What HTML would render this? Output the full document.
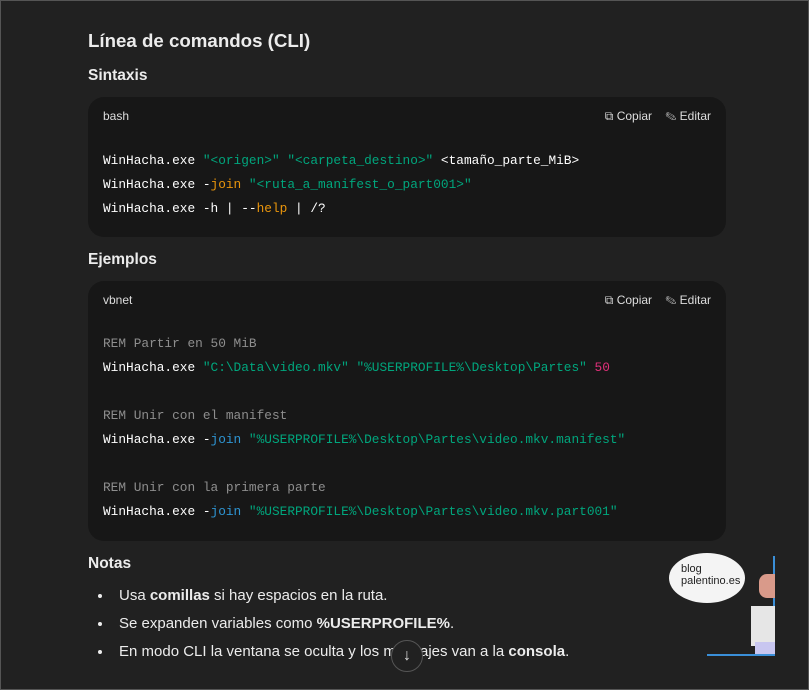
<!DOCTYPE html>
<html><head><meta charset="utf-8"><style>
*{margin:0;padding:0;box-sizing:border-box}
body{width:809px;height:690px;background:#212121;color:#ececec;font-family:"Liberation Sans",sans-serif;overflow:hidden;position:relative;border:1px solid #555}
.h1{position:absolute;left:87px;top:29px;font-size:18.7px;font-weight:bold}
.h3{position:absolute;left:87px;font-size:15.5px;font-weight:bold}
.code{position:absolute;left:87px;width:638px;background:#171717;border-radius:16px}
.hd{position:absolute;top:12px;left:15px;font-size:12px;color:#ddd}
.act{position:absolute;top:12px;right:15px;font-size:12px;color:#ddd}
pre{position:absolute;left:15px;font-family:"Liberation Mono",monospace;font-size:12.8px;line-height:24px;color:#fff}
.s{color:#00a67d}.o{color:#e9950c}.b{color:#2e95d3}.n{color:#df3079}.c{color:#8e8e8e}
ul{position:absolute;left:112px;top:581px;font-size:15px;line-height:28px}
li{margin:0;padding-left:6px}
</style></head><body>
<div class="h1">Línea de comandos (CLI)</div>
<div class="h3" style="top:66px">Sintaxis</div>
<div class="code" style="top:96px;height:140px">
<div class="hd">bash</div><div class="act">⧉ Copiar &nbsp;&nbsp; ✎ Editar</div>
<pre style="top:52px">WinHacha.exe <span class="s">"&lt;origen&gt;"</span> <span class="s">"&lt;carpeta_destino&gt;"</span> &lt;tamaño_parte_MiB&gt;
WinHacha.exe -<span class="o">join</span> <span class="s">"&lt;ruta_a_manifest_o_part001&gt;"</span>
WinHacha.exe -h | --<span class="o">help</span> | /?</pre>
</div>
<div class="h3" style="top:250px">Ejemplos</div>
<div class="code" style="top:280px;height:260px">
<div class="hd">vbnet</div><div class="act">⧉ Copiar &nbsp;&nbsp; ✎ Editar</div>
<pre style="top:51px"><span class="c">REM Partir en 50 MiB</span>
WinHacha.exe <span class="s">"C:\Data\video.mkv"</span> <span class="s">"%USERPROFILE%\Desktop\Partes"</span> <span class="n">50</span>

<span class="c">REM Unir con el manifest</span>
WinHacha.exe -<span class="b">join</span> <span class="s">"%USERPROFILE%\Desktop\Partes\video.mkv.manifest"</span>

<span class="c">REM Unir con la primera parte</span>
WinHacha.exe -<span class="b">join</span> <span class="s">"%USERPROFILE%\Desktop\Partes\video.mkv.part001"</span></pre>
</div>
<div class="h3" style="top:554px">Notas</div>
<ul>
<li>Usa <b>comillas</b> si hay espacios en la ruta.</li>
<li>Se expanden variables como <b>%USERPROFILE%</b>.</li>
<li>En modo CLI la ventana se oculta y los mensajes van a la <b>consola</b>.</li>
</ul>
<div style="position:absolute;left:390px;top:639px;width:32px;height:32px;border-radius:50%;background:#212121;border:1px solid #555;color:#ddd;text-align:center;line-height:30px;font-size:16px">↓</div>
<div style="position:absolute;left:668px;top:552px;width:76px;height:50px;border-radius:50%;background:#f4f4f4;color:#222;font-size:11px;line-height:12px;padding:10px 0 0 12px">blog<br>palentino.es</div>
<div style="position:absolute;left:706px;top:555px;width:68px;height:100px;border-right:2px solid #3a8fd8;border-bottom:2px solid #3a8fd8">
<div style="position:absolute;left:52px;top:18px;width:16px;height:24px;background:#d99a8a;border-radius:8px 0 0 8px"></div>
<div style="position:absolute;left:44px;top:50px;width:24px;height:40px;background:#e6e6e6"></div>
<div style="position:absolute;left:48px;top:86px;width:20px;height:12px;background:#c8c6f0"></div>
</div>
</body></html>
